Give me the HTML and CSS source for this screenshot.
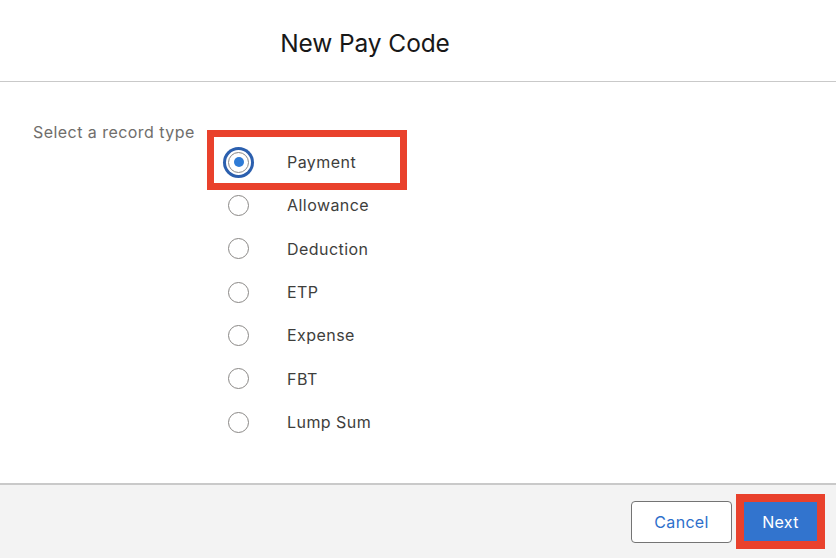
FILE: index.html
```html
<!DOCTYPE html>
<html lang="en">
<head>
<meta charset="utf-8">
<title>New Pay Code</title>
<link rel="stylesheet" href="styles.css">
</head>
<body>
<div class="modal">
  <header class="modal-header">
    <h2 class="modal-title">New Pay Code</h2>
  </header>
  <section class="modal-body">
    <div class="field-label">Select a record type</div>
    <div class="radio-list">
      <label class="radio-row selected">
        <span class="radio checked"><span class="dot"></span></span>
        <span class="radio-text">Payment</span>
      </label>
      <label class="radio-row">
        <span class="radio"></span>
        <span class="radio-text">Allowance</span>
      </label>
      <label class="radio-row">
        <span class="radio"></span>
        <span class="radio-text">Deduction</span>
      </label>
      <label class="radio-row">
        <span class="radio"></span>
        <span class="radio-text">ETP</span>
      </label>
      <label class="radio-row">
        <span class="radio"></span>
        <span class="radio-text">Expense</span>
      </label>
      <label class="radio-row">
        <span class="radio"></span>
        <span class="radio-text">FBT</span>
      </label>
      <label class="radio-row">
        <span class="radio"></span>
        <span class="radio-text">Lump Sum</span>
      </label>
    </div>
  </section>
  <footer class="modal-footer">
    <button class="btn btn-neutral">Cancel</button>
    <button class="btn btn-brand">Next</button>
  </footer>
</div>
</body>
</html>
```

FILE: styles.css
```css
*, *::before, *::after { box-sizing: border-box; }
html, body { margin: 0; padding: 0; }
body {
  font-family: Inter, "Noto Sans", "Liberation Sans", sans-serif;
  background: #ffffff;
  color: #3e3e3c;
}
.modal {
  height: 558px;
  display: flex;
  flex-direction: column;
}
.modal-header {
  height: 82px;
  border-bottom: 1px solid #c9c9c9;
  display: flex;
  align-items: center;
  justify-content: center;
  padding-right: 106px;
  padding-top: 4px;
}
.modal-title {
  margin: 0;
  font-size: 24.5px;
  font-weight: 400;
  color: #181818;
  letter-spacing: -0.1px;
}
.modal-body {
  flex: 1;
  display: grid;
  grid-template-columns: 195px 1fr;
  padding: 40px 0 0 33px;
}
.field-label {
  font-size: 16px;
  line-height: 20px;
  color: #706e6b;
  height: 20px;
  letter-spacing: 0.45px;
}
.radio-list {
  margin-top: 18.5px;
  display: flex;
  flex-direction: column;
}
.radio-row {
  position: relative;
  height: 43.33px;
  display: flex;
  align-items: center;
  font-size: 16px;
  color: #3e3e3c;
  letter-spacing: 0.45px;
}
.radio {
  width: 21px;
  height: 21px;
  border-radius: 50%;
  border: 1px solid #8a8886;
  background: #fff;
  display: flex;
  align-items: center;
  justify-content: center;
  margin-right: 38px;
  flex: none;
}
.radio.checked {
  border-color: #8a8886;
  box-shadow: 0 0 0 2px #fff, 0 0 0 5px #2b5fae;
}
.radio .dot {
  width: 10px;
  height: 10px;
  border-radius: 50%;
  background: #2e7bd6;
}
.radio-row.selected::after {
  content: "";
  position: absolute;
  left: -21px;
  top: -11px;
  width: 200px;
  height: 60px;
  border: 7px solid #e9412c;
  pointer-events: none;
}
.modal-footer {
  height: 75px;
  border-top: 2px solid #c9c9c9;
  background: #f3f3f3;
  display: flex;
  align-items: center;
  justify-content: flex-end;
  padding: 0 19px 0 0;
}
.btn {
  font-family: inherit;
  font-size: 16px;
  border-radius: 4px;
  cursor: pointer;
  letter-spacing: 0.3px;
}
.btn-neutral {
  width: 101px;
  height: 42px;
  background: #fff;
  border: 1px solid #747474;
  color: #2e6fcb;
  margin-right: 12px;
}
.btn-brand {
  width: 73px;
  height: 39px;
  background: #3274ce;
  border: none;
  border-radius: 0;
  color: #fff;
  outline: 8px solid #e9412c;
}
```
